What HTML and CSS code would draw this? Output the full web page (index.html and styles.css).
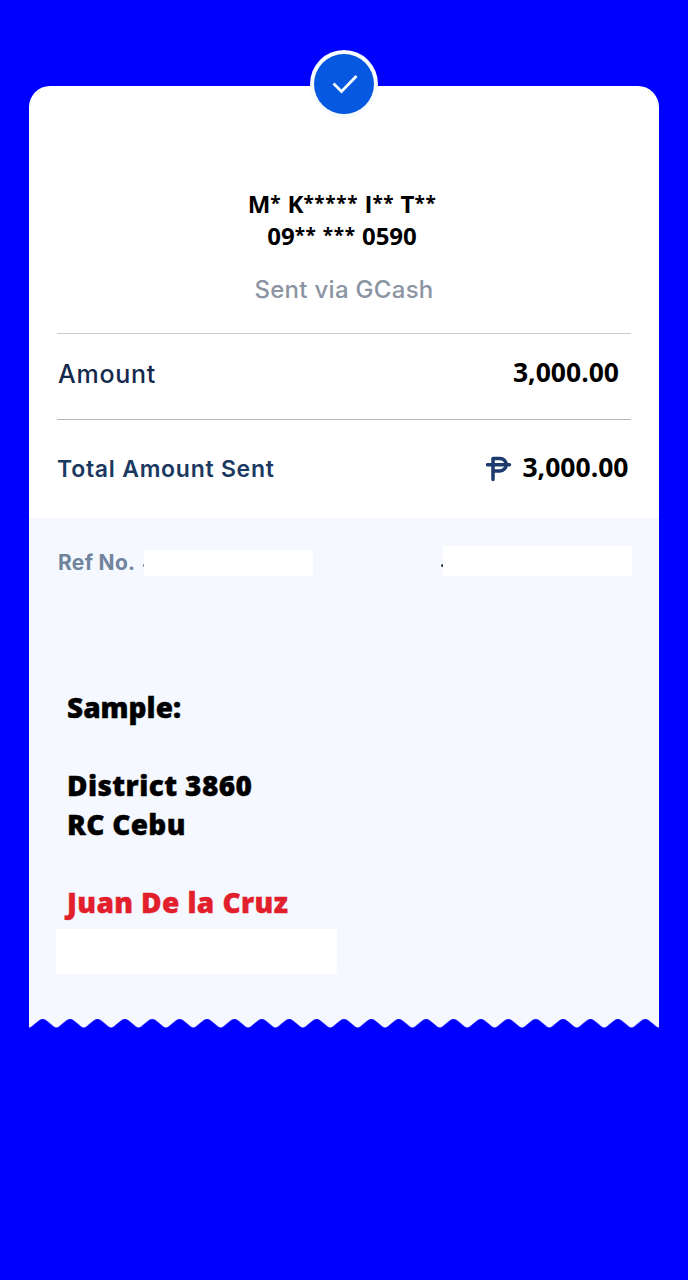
FILE: index.html
```html
<!DOCTYPE html>
<html lang="en">
<head>
<meta charset="utf-8">
<title>Receipt</title>
<link rel="stylesheet" href="styles.css">
</head>
<body>
<main class="receipt">
  <svg class="badge" viewBox="0 0 68 68"><circle cx="34" cy="34" r="34" fill="#f7fcff"/><circle cx="34" cy="34" r="30" fill="#0758e0"/><path d="M23.500 33.500 31.500 41.500 46.500 26" fill="none" stroke="#f7fcff" stroke-width="2.8"/></svg>
  <section class="summary">
    <header class="recipient">
      <div class="name">M<span class="stars">*</span> K<span class="stars">*****</span> I<span class="stars">**</span> T<span class="stars">**</span></div>
      <div class="phone">09<span class="stars">**</span> <span class="stars">***</span> 0590</div>
      <div class="via">Sent via GCash</div>
    </header>
    <div class="row amount"><span class="label">Amount</span><span class="value">3,000.00</span></div>
    <div class="row total"><span class="label">Total Amount Sent</span>
      <span class="sum"><svg class="peso" viewBox="0 0 26 26"><path d="M7 23.500V2.500h7a6.200 6.200 0 0 1 0 12.400H7M1.500 8.700h22" fill="none" stroke="#1d3a6e" stroke-linecap="round" stroke-linejoin="round" stroke-width="3.5"/></svg><span class="value">3,000.00</span></span>
    </div>
  </section>
  <section class="details">
    <div class="reference"><span class="ref-label">Ref No.</span><span class="mask mask-ref"></span><span class="mask mask-date"></span></div>
    <div class="note">
      <p>Sample:</p>
      <p class="district">District 3860</p>
      <p class="club">RC Cebu</p>
      <p class="person">Juan De la Cruz</p>
    </div>
    <div class="mask mask-note"></div>
  </section>
  <svg class="edge" viewBox="0 0 630 12">
    <defs><pattern id="wave" x="0" y="0" width="27.39" height="12" patternUnits="userSpaceOnUse"><path d="M0 0H27.390V9.500C24 9.500 18 1 13.700 1S3.400 9.500 0 9.500Z" fill="#f5f8ff"/></pattern></defs>
    <rect width="630" height="12" fill="url(#wave)"/>
  </svg>
</main>
</body>
</html>
```
FILE: styles.css
```css
* { box-sizing: border-box; }
body { margin: 0; min-height: 1280px; padding-top: 85.5px; background: #0000ff; font-family: Inter, sans-serif; }
p { margin: 0; }
.receipt { position: relative; width: 630px; margin-left: 29px; }
.badge { position: absolute; left: 281px; top: -35.5px; width: 68px; height: 68px; }
.summary { height: 432px; padding: 102px 28px 0; border-radius: 21px 21px 0 0; background: #fff; }
.recipient { height: 146px; border-bottom: 1.5px solid #c9ccd1; text-align: center; white-space: nowrap; }
.name, .phone { height: 32px; line-height: 32px; margin-left: -4px; font-family: "Open Sans", "Noto Sans", sans-serif; font-weight: 700; font-size: 24px; color: #000; }
.stars { font-size: 19px; line-height: 0; vertical-align: 3.5px; letter-spacing: 0.6px; }
.via { margin-top: 22px; line-height: 32px; font-size: 24px; letter-spacing: 0.3px; color: #8b95a2; font-weight: 500; }
.row { display: flex; justify-content: space-between; white-space: nowrap; }
.amount { height: 86px; padding: 23px 12px 0 0; border-bottom: 1px solid #b2b8bf; }
.total { padding-top: 33px; padding-right: 2px; }
.label { line-height: 34px; font-size: 25px; letter-spacing: 0.75px; padding-left: 1px; font-weight: 550; color: #14294c; }
.total .label { font-size: 23px; letter-spacing: 0.75px; font-weight: 600; padding-left: 0; line-height: 32px; color: #1b3861; }
.value { margin-top: -2px; font: 700 26.5px/32px "Open Sans", "Noto Sans", sans-serif; color: #000; }
.amount .value { margin-top: -1px; }
.sum { display: flex; gap: 10px; }
.total .value { margin-right: 0.5px; }
.peso { width: 26px; height: 26px; margin-top: 3px; }
.details { height: 501px; padding: 28px 27px 0; background: #f5f8ff; }
.reference { display: flex; height: 31px; }
.ref-label { position: relative; width: 88px; padding-left: 2px; font-size: 21px; line-height: 33px; letter-spacing: 0.3px; font-weight: 700; color: #70849c; white-space: nowrap; }
.mask { background: #fff; }
/* Sliver of the hidden value left of each mask */
.ref-label::after, .mask-date::before { content: ""; position: absolute; top: 18px; width: 2px; height: 3px; border-radius: 2px 0 0 2px; }
.ref-label::after { right: 0; width: 1px; background: #70849c; }
.mask-date::before { left: -2px; background: #303a48; }
.mask-ref { width: 169px; height: 26px; margin-top: 4px; }
.mask-date { position: relative; width: 189px; height: 30px; margin-left: 130px; }
.note { margin: 111px 0 0 11px; height: 241px; font: 800 28px/39px "Open Sans", "Noto Sans", sans-serif; color: #000; white-space: nowrap; -webkit-text-stroke: 0.4px currentColor; }
.district, .person { margin-top: 39px; letter-spacing: 0.4px; }
.club { letter-spacing: 0.3px; }
.person { color: #e2202c; }
.mask-note { width: 281px; height: 45px; }
.edge { display: block; width: 630px; height: 12px; margin-top: -1px; }
```
